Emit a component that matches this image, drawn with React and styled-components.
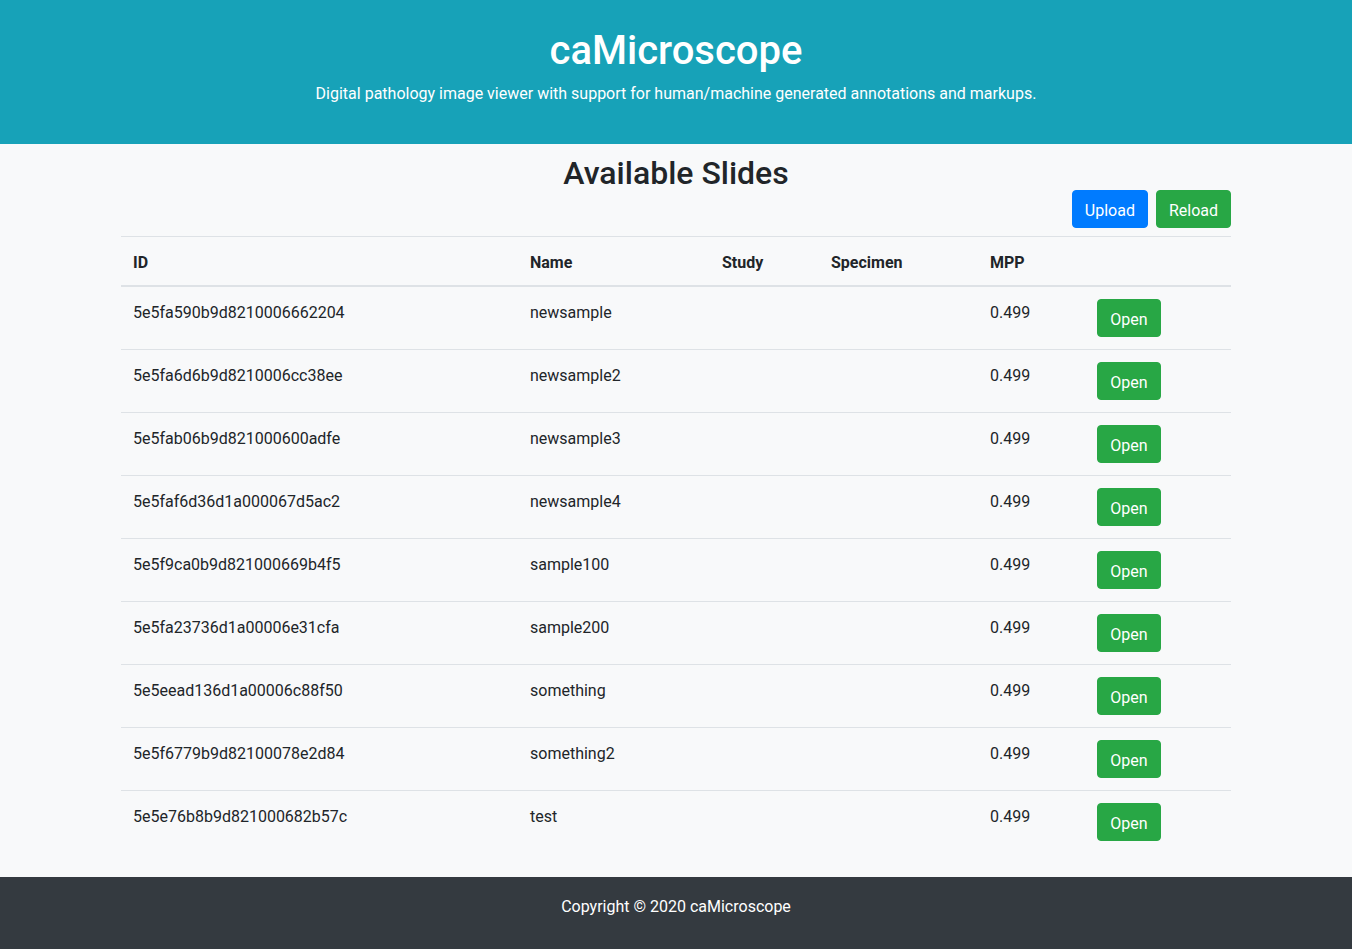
import React from "react";
import styled, { createGlobalStyle } from "styled-components";

const Global = createGlobalStyle`
  * { box-sizing: border-box; }
  html, body { margin: 0; padding: 0; }
  body {
    font-family: Roboto, "Noto Sans", "Liberation Sans", sans-serif;
    font-size: 16px;
    line-height: 1.5;
    color: #212529;
    background: #f8f9fa;
  }
`;

const Header = styled.header`
  background: #17a2b8;
  color: #fff;
  text-align: center;
  padding: 27px 15px 22px;
`;

const Title = styled.h1`
  margin: 0 0 7px;
  font-size: 40px;
  font-weight: 500;
  line-height: 48px;
`;

const Lead = styled.p`
  margin: 0 0 16px;
  font-size: 16px;
  line-height: 24px;
`;

const Main = styled.main`
  background: #f8f9fa;
  padding-bottom: 24px;
`;

const Container = styled.div`
  width: 1140px;
  margin: 0 auto;
  padding: 0 15px;
`;

const PageTitle = styled.h2`
  margin: 12px 0 0;
  font-size: 32px;
  font-weight: 500;
  line-height: 34px;
  text-align: center;
`;

const Toolbar = styled.div`
  display: flex;
  justify-content: flex-end;
  gap: 8px;
  margin-bottom: 8px;
`;

const Button = styled.button`
  font-family: inherit;
  font-size: 16px;
  line-height: 24px;
  padding: 8px 12px 4px;
  min-width: ${(p) => (p.$wide ? "64px" : "auto")};
  border: 1px solid ${(p) => (p.$variant === "primary" ? "#007bff" : "#28a745")};
  background: ${(p) => (p.$variant === "primary" ? "#007bff" : "#28a745")};
  color: #fff;
  border-radius: 4px;
  cursor: pointer;
`;

const Table = styled.table`
  width: 100%;
  border-collapse: collapse;
  table-layout: fixed;
`;

const Th = styled.th`
  text-align: left;
  font-weight: 700;
  padding: 14px 12px 10px;
  line-height: 24px;
  border-top: 1px solid #dee2e6;
  border-bottom: 2px solid #dee2e6;
  vertical-align: bottom;
`;

const Td = styled.td`
  padding: 14px 12px 10px;
  line-height: 24px;
  border-top: ${(p) => (p.$first ? "none" : "1px solid #dee2e6")};
  vertical-align: top;
`;

const ActionTd = styled(Td)`
  padding-top: 12px;
  padding-bottom: 12px;
`;

const Footer = styled.footer`
  background: #343a40;
  color: #fff;
  text-align: center;
  padding: 18px 15px 30px;
  line-height: 24px;
`;

const slides = [
  ["5e5fa590b9d8210006662204", "newsample"],
  ["5e5fa6d6b9d8210006cc38ee", "newsample2"],
  ["5e5fab06b9d821000600adfe", "newsample3"],
  ["5e5faf6d36d1a000067d5ac2", "newsample4"],
  ["5e5f9ca0b9d821000669b4f5", "sample100"],
  ["5e5fa23736d1a00006e31cfa", "sample200"],
  ["5e5eead136d1a00006c88f50", "something"],
  ["5e5f6779b9d82100078e2d84", "something2"],
  ["5e5e76b8b9d821000682b57c", "test"],
];

const widths = [397, 192, 109, 159, 107, 146];

export default function App() {
  return (
    <>
      <Global />
      <Header>
        <Title>caMicroscope</Title>
        <Lead>
          Digital pathology image viewer with support for human/machine generated annotations and markups.
        </Lead>
      </Header>
      <Main>
        <Container>
          <PageTitle>Available Slides</PageTitle>
          <Toolbar>
            <Button $variant="primary">Upload</Button>
            <Button>Reload</Button>
          </Toolbar>
          <Table>
            <colgroup>
              {widths.map((w, i) => (
                <col key={i} style={{ width: w }} />
              ))}
            </colgroup>
            <thead>
              <tr>
                <Th>ID</Th>
                <Th>Name</Th>
                <Th>Study</Th>
                <Th>Specimen</Th>
                <Th>MPP</Th>
                <Th></Th>
              </tr>
            </thead>
            <tbody>
              {slides.map(([id, name], i) => (
                <tr key={id}>
                  <Td $first={i === 0}>{id}</Td>
                  <Td $first={i === 0}>{name}</Td>
                  <Td $first={i === 0}></Td>
                  <Td $first={i === 0}></Td>
                  <Td $first={i === 0}>0.499</Td>
                  <ActionTd $first={i === 0}>
                    <Button $wide>Open</Button>
                  </ActionTd>
                </tr>
              ))}
            </tbody>
          </Table>
        </Container>
      </Main>
      <Footer>Copyright © 2020 caMicroscope</Footer>
    </>
  );
}
